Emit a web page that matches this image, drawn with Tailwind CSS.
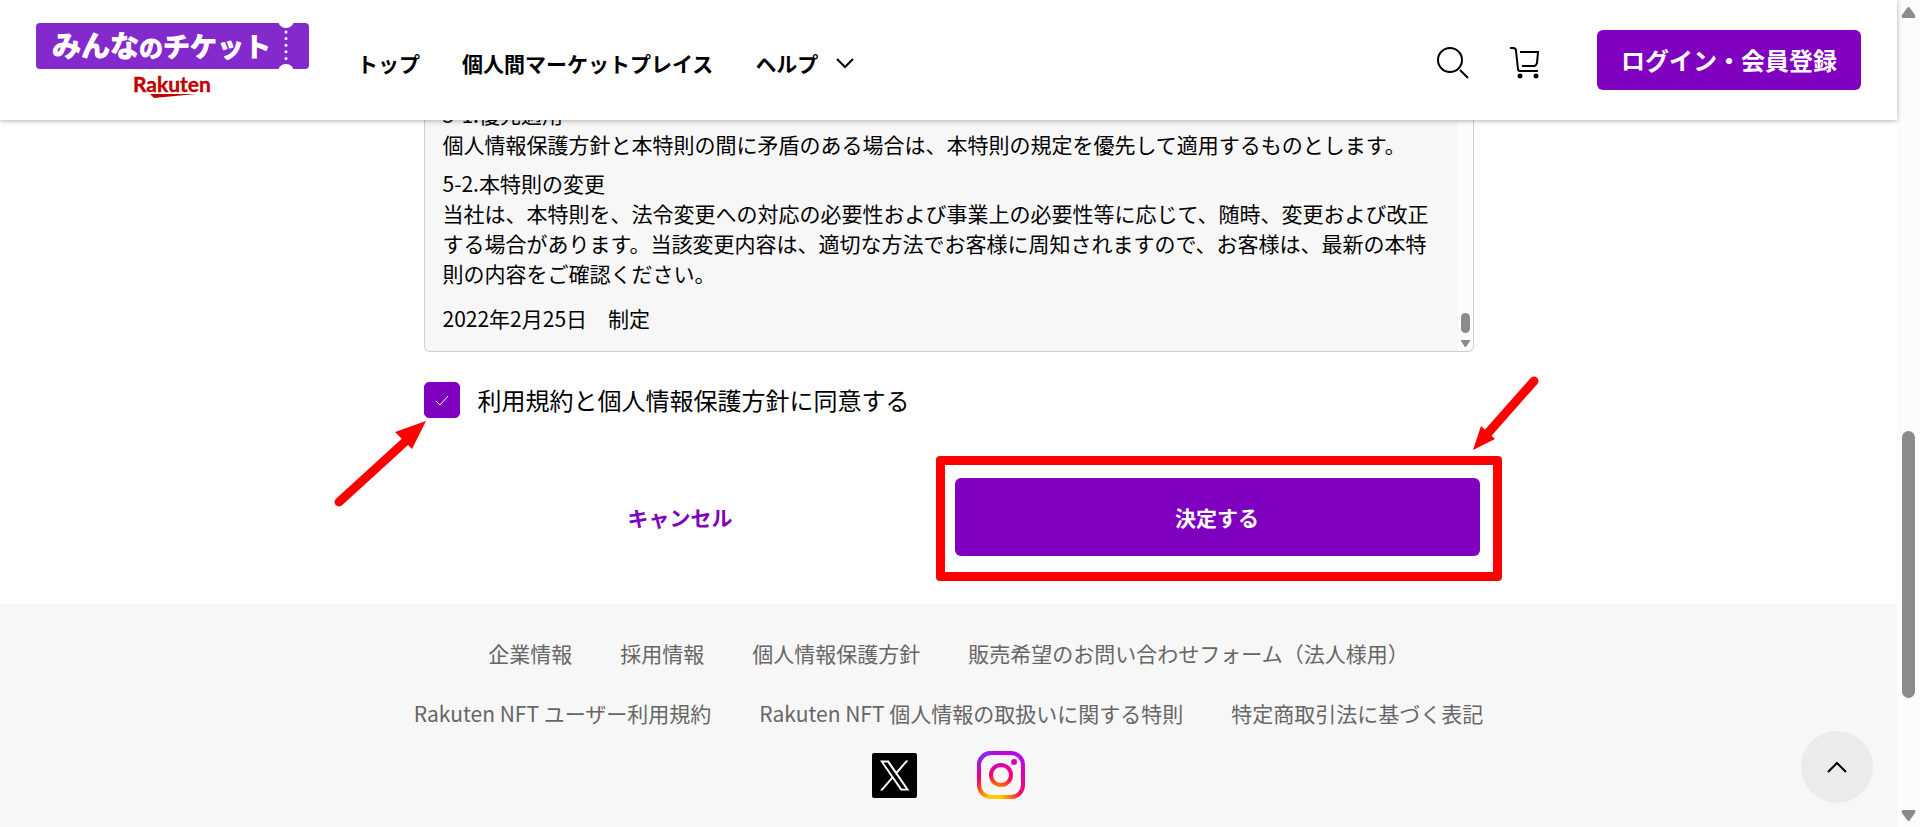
<!DOCTYPE html>
<html lang="ja">
    <head>
        <meta charset="UTF-8" />
        <meta name="viewport" content="width=device-width, initial-scale=1.0" />
        <title>みんなのチケット | Rakuten NFT</title>
        <script src="https://cdn.jsdelivr.net/npm/@tailwindcss/browser@4"></script>
    </head>
    <body class="flex min-h-screen bg-white font-['Noto_Sans_CJK_JP',sans-serif] text-[21px] leading-[30px] text-black">
        <div class="flex min-w-0 flex-1 flex-col">
            <header class="sticky top-0 z-10 flex h-[120px] items-center bg-white px-9 shadow-[0_1px_5px_rgba(0,0,0,0.3)]">
                <a href="#" aria-label="みんなのチケット Rakuten" class="pt-0.5">
                    <svg width="273" height="76" viewBox="0 0 273 76">
                        <rect width="273" height="46" rx="4" fill="#8429cc" />
                        <circle cx="250" cy="-3" r="8" fill="#fff" />
                        <circle cx="250" cy="49" r="8" fill="#fff" />
                        <path d="M250 9v30" stroke="#fff" stroke-width="3" stroke-linecap="round" stroke-dasharray="0 6.6" />
                        <text x="16" y="34" fill="#fff" stroke="#fff" stroke-width="1" stroke-linejoin="round" font-weight="700" font-size="29">みんな<tspan font-size="24">の</tspan><tspan font-size="27">チケット</tspan></text>
                        <text x="97" y="69" fill="#bf0000" stroke="#bf0000" stroke-width=".4" font-family="Lato, sans-serif" font-weight="700" font-size="21">Rakuten</text>
                        <path d="M114 71h46l-42 4z" fill="#bf0000" />
                    </svg>
                </a>
                <nav class="ml-12 flex flex-1 gap-[42px] pt-1.5 font-bold">
                    <a href="#">トップ</a>
                    <a href="#">個人間マーケットプレイス</a>
                    <button type="button" class="flex items-center gap-[18px]">
                        ヘルプ
                        <svg width="18" height="11" viewBox="0 0 18 11" fill="none" stroke="currentColor" stroke-width="2">
                            <path d="M1 1l8 8 8-8" />
                        </svg>
                    </button>
                </nav>
                <div class="flex items-center">
                    <button type="button" aria-label="検索" class="mr-10 pt-1.5">
                        <svg width="32" height="33" viewBox="0 0 32 33" fill="none" stroke="currentColor" stroke-width="2">
                            <circle cx="13" cy="13" r="12" />
                            <path d="M23 23l8 8" />
                        </svg>
                    </button>
                    <a href="#" aria-label="カート" class="mr-14 pt-1.5">
                        <svg width="32" height="33" viewBox="0 0 32 33" fill="none" stroke="currentColor" stroke-width="2">
                            <path d="M1 1h3q3 0 3 3l2 18q0 2 2 2h18" />
                            <path d="M11 5h18l-1 11q-1 3-3 3H13" />
                            <circle cx="11" cy="29" r="2.500" fill="currentColor" stroke="none" />
                            <circle cx="27" cy="29" r="2.500" fill="currentColor" stroke="none" />
                        </svg>
                    </a>
                    <button type="button" class="h-[60px] rounded-md bg-[#7f00bf] px-6 text-2xl font-bold text-white">ログイン・会員登録</button>
                </div>
            </header>

            <main class="mx-auto w-full max-w-[1050px] pb-12">
                <!-- 利用規約 -->
                <section class="-mt-[21px] flex rounded-md border border-t-0 border-[#cfcfcf] bg-[#f7f7f7]">
                    <div class="flex-1 pr-4 pb-[18px] pl-[18px]">
                        <p>5-1.優先適用<br />個人情報保護方針と本特則の間に矛盾のある場合は、本特則の規定を優先して適用するものとします。</p>
                        <p class="mt-[9px]">5-2.本特則の変更<br />当社は、本特則を、法令変更への対応の必要性および事業上の必要性等に応じて、随時、変更および改正する場合があります。当該変更内容は、適切な方法でお客様に周知されますので、お客様は、最新の本特則の内容をご確認ください。</p>
                        <p class="mt-[15px]">2022年2月25日　制定</p>
                    </div>
                    <div class="flex w-[15px] flex-col items-center justify-end gap-[7px] rounded-br-md bg-[#fcfcfc] pb-1">
                        <div class="h-5 w-[9px] rounded-full bg-[#8b8b8b]"></div>
                        <svg width="9" height="7" viewBox="0 0 9 7" fill="#8b8b8b"><path d="M0 0h9v1L5 7H4L0 1z" /></svg>
                    </div>
                </section>

                <div class="relative mt-[30px] flex items-center">
                    <input type="checkbox" id="agree" checked class="size-9 appearance-none rounded-[5px] border border-[#7f00bf] checked:bg-[#7f00bf]" />
                    <svg class="pointer-events-none absolute top-[13px] left-[11px]" width="14" height="11" viewBox="0 0 14 11" fill="none" stroke="#fff">
                        <path d="M1 6l4 4 8-9" />
                    </svg>
                    <label for="agree" class="pl-[18px] text-2xl leading-[34px]">利用規約と個人情報保護方針に同意する</label>
                    <svg class="pointer-events-none absolute top-[38px] -left-[91px]" width="94" height="90" viewBox="0 0 94 90" fill="#f00">
                        <path d="M6 82l68-62" stroke="#f00" stroke-width="9" stroke-linecap="round" />
                        <path d="M93 1L62 12l17 17z" />
                    </svg>
                </div>

                <div class="-mx-1.5 mt-[60px] grid grid-cols-2 gap-3 font-bold">
                    <button type="button" class="h-[78px] rounded-md text-[#7f00bf]">キャンセル</button>
                    <div class="relative">
                        <button type="submit" class="h-[78px] w-full rounded-md bg-[#7f00bf] text-white">決定する</button>
                        <div class="pointer-events-none absolute -top-[22px] -right-[22px] -bottom-[25px] -left-[19px] rounded-[4px] border-9 border-[#f00]"></div>
                        <svg class="pointer-events-none absolute -top-[103px] -right-[60px]" width="68" height="76" viewBox="0 0 68 76" fill="#f00">
                            <path d="M62 6L16 58" stroke="#f00" stroke-width="9" stroke-linecap="round" />
                            <path d="M1 75L9 51l14 13z" />
                        </svg>
                    </div>
                </div>
            </main>

            <footer class="relative flex-1 bg-[#f7f7f7] pt-[34px] text-[#666]">
                <div class="flex justify-center gap-12">
                    <a href="#">企業情報</a>
                    <a href="#">採用情報</a>
                    <a href="#">個人情報保護方針</a>
                    <a href="#">販売希望のお問い合わせフォーム（法人様用）</a>
                </div>
                <div class="mt-[30px] flex justify-center gap-12">
                    <a href="#">Rakuten NFT ユーザー利用規約</a>
                    <a href="#">Rakuten NFT 個人情報の取扱いに関する特則</a>
                    <a href="#">特定商取引法に基づく表記</a>
                </div>
                <div class="mt-[23px] flex items-center justify-center gap-[60px]">
                    <a href="#" aria-label="X">
                        <svg width="45" height="45" viewBox="0 0 45 45">
                            <rect width="45" height="45" rx="2" fill="#000" />
                            <path transform="translate(8 7.5) scale(.098 .1)" fill="#fff" d="M178.57 127.15 290.27 0h-26.46l-97.03 110.38L89.34 0H0l117.13 166.93L0 300.25h26.46l102.4-116.59 81.8 116.59h89.34M36.01 19.54H76.66l187.13 262.13h-40.66" />
                        </svg>
                    </a>
                    <a href="#" aria-label="Instagram">
                        <svg width="48" height="48" viewBox="0 0 48 48">
                            <defs>
                                <radialGradient id="ig-warm" gradientUnits="userSpaceOnUse" cx="18" cy="50" r="52">
                                    <stop offset="0" stop-color="#ffd600" />
                                    <stop offset=".15" stop-color="#ffc800" />
                                    <stop offset=".35" stop-color="#ff5a10" />
                                    <stop offset=".52" stop-color="#ff0069" />
                                    <stop offset=".75" stop-color="#e100b0" />
                                    <stop offset="1" stop-color="#b900f0" />
                                </radialGradient>
                                <radialGradient id="ig-cool" gradientUnits="userSpaceOnUse" cx="5" cy="2" r="26">
                                    <stop offset="0" stop-color="#7638fa" />
                                    <stop offset="1" stop-color="#b900f0" stop-opacity="0" />
                                </radialGradient>
                                <g id="ig-camera" fill="none" stroke-width="4">
                                    <rect x="2" y="2" width="44" height="44" rx="12" />
                                    <circle cx="24" cy="24" r="10" />
                                    <path d="M37 11v.01" stroke-width="6" stroke-linecap="round" />
                                </g>
                            </defs>
                            <use href="#ig-camera" stroke="url(#ig-warm)" />
                            <use href="#ig-camera" stroke="url(#ig-cool)" />
                        </svg>
                    </a>
                </div>
                <button type="button" aria-label="ページの先頭へ" class="absolute right-6 bottom-6 flex size-[72px] items-center justify-center rounded-full bg-[#ebebeb] text-black">
                    <svg width="20" height="12" viewBox="0 0 20 12" fill="none" stroke="currentColor" stroke-width="2">
                        <path d="M1 11l9-9 9 9" />
                    </svg>
                </button>
            </footer>
        </div>

        <!-- scroll track -->
        <div class="flex w-[23px] flex-col items-center bg-[#fcfcfc] pt-[7px] pb-1.5">
            <svg width="15" height="11" viewBox="0 0 15 11" fill="#8b8b8b"><path d="M6 1q2-2 3 0l5 7q1 3-1 3H2q-2 0-1-3z" /></svg>
            <div class="grow-[414]"></div>
            <div class="w-[13px] grow-[267] rounded-full bg-[#8b8b8b]"></div>
            <div class="grow-[112]"></div>
            <svg width="15" height="11" viewBox="0 0 15 11" fill="#8b8b8b"><path d="M6 10q2 2 3 0l5-7q1-3-1-3H2q-2 0-1 3z" /></svg>
        </div>
    </body>
</html>
